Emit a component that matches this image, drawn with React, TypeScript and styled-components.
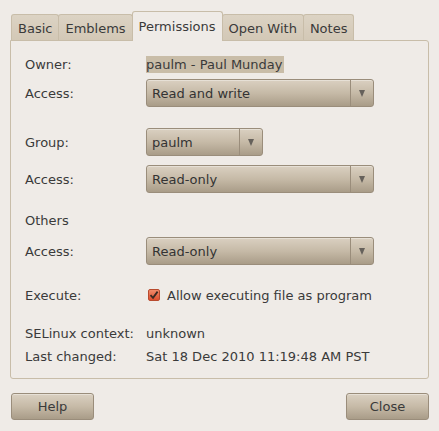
import React from "react";
import styled, { createGlobalStyle } from "styled-components";

const GlobalStyle = createGlobalStyle`
  html, body {
    margin: 0;
    padding: 0;
    background: #efebe7;
  }
  body {
    font-family: "DejaVu Sans", "Liberation Sans", sans-serif;
    font-size: 13px;
    color: #3a3a3a;
  }
`;

const Dialog = styled.div`
  width: 439px;
  height: 431px;
  box-sizing: border-box;
  padding: 11px 10px 0 10px;
  display: flex;
  flex-direction: column;
`;

const TabBar = styled.div`
  display: flex;
  align-items: flex-end;
  padding-left: 1px;
  position: relative;
  z-index: 1;
`;

const Tab = styled.div<{ $active?: boolean }>`
  box-sizing: border-box;
  height: ${(p) => (p.$active ? 30 : 26)}px;
  margin-bottom: ${(p) => (p.$active ? -1 : 0)}px;
  padding: 0 6px;
  display: flex;
  align-items: center;
  padding-top: ${(p) => (p.$active ? 0 : 2)}px;
  border: 1px solid #c8bda9;
  border-bottom: none;
  border-radius: 3px 3px 0 0;
  background: ${(p) =>
    p.$active ? "#efebe7" : "linear-gradient(#dcd3c4, #d3c8b6)"};
  & + & {
    margin-left: -1px;
  }
`;

const Panel = styled.div`
  box-sizing: border-box;
  height: 339px;
  border: 1px solid #c8bda9;
  border-radius: 0 3px 3px 3px;
  padding: 0 14px;
  display: flex;
  flex-direction: column;
`;

const Row = styled.div<{ $top: number; $height?: number }>`
  display: grid;
  grid-template-columns: 121px 1fr;
  align-items: center;
  margin-top: ${(p) => p.$top}px;
  height: ${(p) => p.$height ?? 18}px;
`;

const Label = styled.span`
  white-space: nowrap;
`;

const Selected = styled.span`
  justify-self: start;
  background: #c9bda8;
  height: 17px;
  line-height: 17px;
  padding-right: 1px;
`;

const Combo = styled.div<{ $width: number }>`
  box-sizing: border-box;
  width: ${(p) => p.$width}px;
  height: 28px;
  display: flex;
  border: 1px solid #9a8d7b;
  border-radius: 3px;
  background: linear-gradient(#dad0c1, #c6baa7 50%, #a99c88);
  box-shadow: inset 0 1px 0 rgba(255, 255, 255, 0.35);
`;

const ComboText = styled.span`
  flex: 1;
  padding-left: 5px;
  display: flex;
  align-items: center;
  color: #333333;
`;

const ComboArrow = styled.span`
  width: 22px;
  border-left: 1px solid #9a8d7b;
  display: flex;
  align-items: center;
  justify-content: center;
  &::after {
    content: "";
    width: 0;
    height: 0;
    margin-top: 1px;
    border-left: 3.5px solid transparent;
    border-right: 3.5px solid transparent;
    border-top: 7px solid #66615b;
  }
`;

const Check = styled.span`
  width: 12px;
  height: 12px;
  box-sizing: border-box;
  margin: 0 7px 0 2px;
  border: 1px solid #b84a2e;
  border-radius: 2px;
  background: linear-gradient(#f08b6a, #dd4f2f);
  display: flex;
  align-items: center;
  justify-content: center;
`;

const CheckLine = styled.div`
  display: flex;
  align-items: center;
`;

const Footer = styled.div`
  margin-top: 14px;
  display: flex;
  justify-content: space-between;
  padding: 0 0 0 1px;
`;

const Button = styled.div`
  box-sizing: border-box;
  width: 83px;
  height: 27px;
  border: 1px solid #9a8d7b;
  border-radius: 3px;
  background: linear-gradient(#dad0c1, #c6baa7 50%, #a99c88);
  box-shadow: inset 0 1px 0 rgba(255, 255, 255, 0.35);
  display: flex;
  align-items: center;
  justify-content: center;
`;

const Select = ({ width, value }: { width: number; value: string }) => (
  <Combo $width={width}>
    <ComboText>{value}</ComboText>
    <ComboArrow />
  </Combo>
);

export default function App() {
  return (
    <>
      <GlobalStyle />
      <Dialog>
        <TabBar>
          <Tab>Basic</Tab>
          <Tab>Emblems</Tab>
          <Tab $active>Permissions</Tab>
          <Tab>Open With</Tab>
          <Tab>Notes</Tab>
        </TabBar>
        <Panel>
          <Row $top={14}>
            <Label>Owner:</Label>
            <Selected>paulm - Paul Munday</Selected>
          </Row>
          <Row $top={6} $height={28}>
            <Label>Access:</Label>
            <Select width={228} value="Read and write" />
          </Row>
          <Row $top={21} $height={28}>
            <Label>Group:</Label>
            <Select width={117} value="paulm" />
          </Row>
          <Row $top={9} $height={28}>
            <Label>Access:</Label>
            <Select width={228} value="Read-only" />
          </Row>
          <Row $top={18}>
            <Label>Others</Label>
          </Row>
          <Row $top={8} $height={28}>
            <Label>Access:</Label>
            <Select width={228} value="Read-only" />
          </Row>
          <Row $top={21}>
            <Label>Execute:</Label>
            <CheckLine>
              <Check>
                <svg width="10" height="10" viewBox="0 0 10 10">
                  <path
                    d="M1.5 5.2 L4 7.8 L8.6 1.6"
                    fill="none"
                    stroke="#3a2a22"
                    strokeWidth="1.8"
                  />
                </svg>
              </Check>
              Allow executing file as program
            </CheckLine>
          </Row>
          <Row $top={20}>
            <Label>SELinux context:</Label>
            <span>unknown</span>
          </Row>
          <Row $top={5}>
            <Label>Last changed:</Label>
            <span>Sat 18 Dec 2010 11:19:48 AM PST</span>
          </Row>
        </Panel>
        <Footer>
          <Button>Help</Button>
          <Button>Close</Button>
        </Footer>
      </Dialog>
    </>
  );
}
